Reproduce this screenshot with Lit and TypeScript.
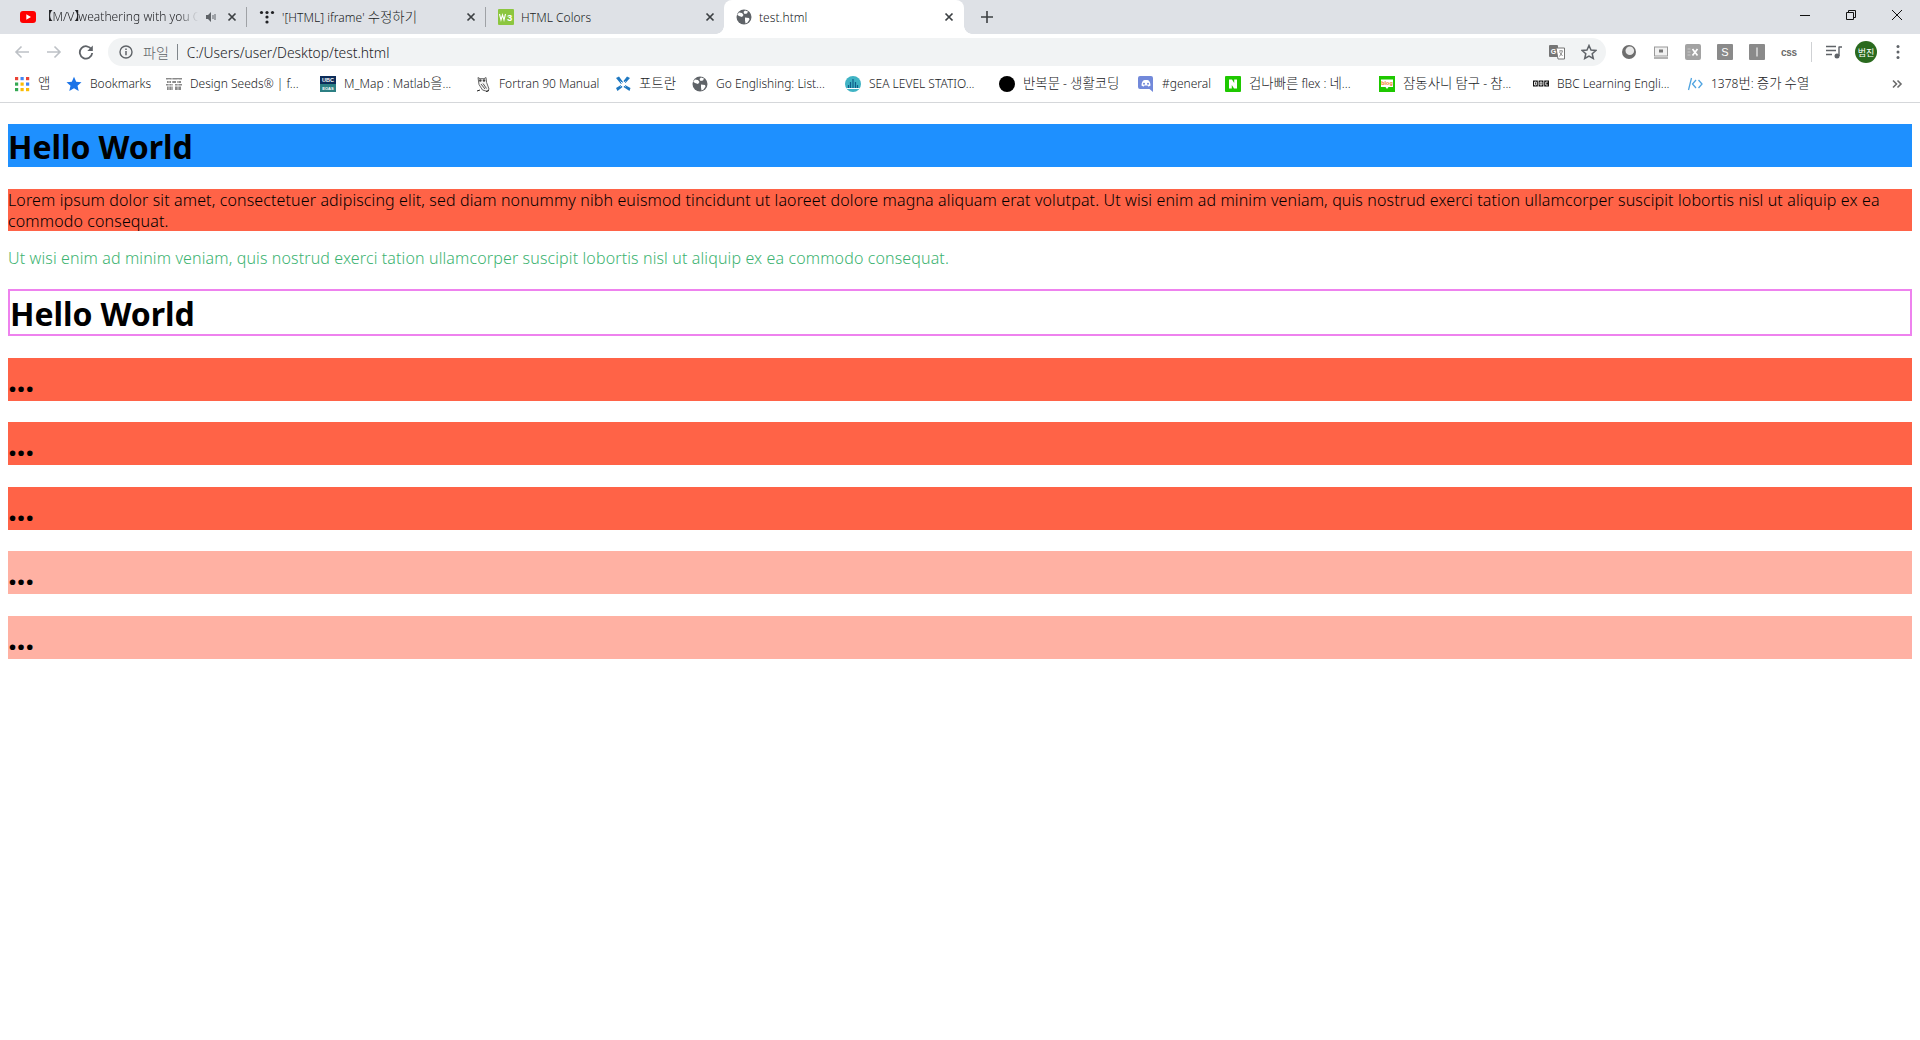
import { LitElement, html, css, svg } from "lit";
import { customElement } from "lit/decorators.js";

const globe = svg`<svg class="ico" viewBox="0 0 16 16"><circle cx="8" cy="8" r="7.5" fill="#5f6368"/><path d="M3 3.5l3 .5 1.5 2L6 8l-3-1-1.800-1.200zM9 1.500l3 1-1 2-2.500 .5-1-2zM9 8.500l4 .5 .5 1.500-2 3-2 1-.5-3z" fill="#fff"/></svg>`;

const ICONS: Record<string, unknown> = {
  apps: svg`<svg class="ico" viewBox="0 0 16 16">${[
    [1, 1, "#ea4335"], [6.500, 1, "#4285f4"], [12, 1, "#ea4335"],
    [1, 6.500, "#34a853"], [6.500, 6.500, "#fbbc05"], [12, 6.500, "#4285f4"],
    [1, 12, "#34a853"], [6.500, 12, "#fbbc05"], [12, 12, "#fbbc05"],
  ].map(([x, y, c]) => svg`<rect x=${x} y=${y} width="3.200" height="3.200" fill=${c as string}/>`)}</svg>`,
  star: svg`<svg class="ico" viewBox="0 0 16 16"><path d="M8 .8l2.200 4.900 5.300.6-4 3.500 1.200 5.300L8 12.300l-4.700 2.800 1.200-5.300-4-3.500 5.300-.6z" fill="#1a73e8"/></svg>`,
  seeds: svg`<svg class="ico" viewBox="0 0 16 16"><path d="M0 2h16v1.500H0zM1 5h4v2H1zM6 5h4v2H6zM11 5h4v2h-4zM0 8h7v1.500H0zM9 8h7v1.500H9zM1 10.500h6V14H1zM9 10.500h6V14H9z" fill="#8a8a8a"/><path d="M3 3v11M12 3v11M6 2v12" stroke="#fff" stroke-width=".6"/></svg>`,
  ubc: svg`<svg class="ico" viewBox="0 0 16 16"><rect width="16" height="8" fill="#0d2d5a"/><rect y="8" width="16" height="8" fill="#2c7f83"/><text x="8" y="6.300" text-anchor="middle" font-size="5.500" font-weight="700" font-family="Liberation Sans" fill="#fff">UBC</text><text x="8" y="14" text-anchor="middle" font-size="4" font-weight="700" font-family="Liberation Sans" fill="#fff">EOAS</text></svg>`,
  owl: svg`<svg class="ico" viewBox="0 0 16 16"><path d="M3 1.500l2 1.200h4l2-1.200.6 5L14 13l-1.500 2.500-5-1.500L4 8.500z" fill="#f4f4f4" stroke="#666" stroke-width="1"/><circle cx="5.300" cy="4.500" r="1.300" fill="#444"/><circle cx="9" cy="4.500" r="1.300" fill="#444"/><path d="M6 8l4 5M8 7.500l3.500 5" stroke="#555"/><path d="M2 15l3-1M11 15.500l3-1" stroke="#222"/></svg>`,
  fortran: svg`<svg class="ico" viewBox="0 0 16 16"><path d="M1 2l3-1.500L8 6 6 8zM15 2l-3-1.500L8.500 5l2 2zM2.500 15L1 12l5-3 1.500 2zM14.500 15l1-3-5.500-3-1.500 2z" fill="#1f78c1"/><path d="M5.500 5.500l5 5M10.500 5.500l-5 5" stroke="#fff" stroke-width="1"/></svg>`,
  sea: svg`<svg class="ico" viewBox="0 0 16 16"><circle cx="8" cy="8" r="8" fill="#3fb3c4"/><path d="M8 3v9M5.500 6v6M10.500 6v6M3.500 9v3M12.500 9v3" stroke="#0f5e8a" stroke-width="1.200"/><path d="M1.500 12.500h13" stroke="#fff"/></svg>`,
  dot: svg`<svg class="ico" viewBox="0 0 16 16"><circle cx="8" cy="8" r="8" fill="#000"/></svg>`,
  discord: svg`<svg class="ico" viewBox="0 0 16 16"><path d="M2 0h11a2 2 0 0 1 2 2v14l-3.500-3H2a2 2 0 0 1-2-2V2a2 2 0 0 1 2-2z" fill="#7289da"/><path d="M3.500 9.500c0-2.500 1-4.500 1.800-5 1-.4 1.700-.4 2.700-.4s1.700 0 2.700.4c.8.5 1.800 2.500 1.800 5-1 .9-1.800 1-2.300 1l-.6-.9H6.400l-.6.9c-.5 0-1.300-.1-2.300-1z" fill="#fff"/><circle cx="6" cy="7.800" r="1" fill="#7289da"/><circle cx="10" cy="7.800" r="1" fill="#7289da"/></svg>`,
  naver: svg`<svg class="ico" viewBox="0 0 16 16"><rect width="16" height="16" rx="1" fill="#1ec800"/><path d="M4 3.500h3l2.200 3.600V3.500H12v9H9L6.800 8.900v3.600H4z" fill="#fff"/></svg>`,
  blog: svg`<svg class="ico" viewBox="0 0 16 16"><rect width="16" height="16" fill="#1ec800"/><path d="M2 3.500h12v7.500H9.500L8 13l-1.500-2H2z" fill="#fff"/><text x="8" y="9.300" text-anchor="middle" font-size="5.500" font-weight="700" font-family="Liberation Sans" fill="#f0801a">blog</text></svg>`,
  bbc: svg`<svg class="ico" viewBox="0 0 16 16"><rect y="4.500" width="4.800" height="6" fill="#111"/><rect x="5.600" y="4.500" width="4.800" height="6" fill="#111"/><rect x="11.200" y="4.500" width="4.800" height="6" fill="#111"/><path d="M1.500 6v3h1.800V6zM7.100 6v3h1.800V6zM14.800 6h-2v3h2" fill="none" stroke="#fff" stroke-width=".9"/></svg>`,
  code: svg`<svg class="ico" viewBox="0 0 16 16"><path d="M4.500 2L1.500 14" stroke="#4fa3e0" stroke-width="1.300" fill="none"/><path d="M9 4L5.500 8 9 12M11.500 4L15 8l-3.500 4" stroke="#4fa3e0" stroke-width="1.300" fill="none"/></svg>`,
  globe,
};

const BOOKMARKS: [string, string, number][] = [
  ["apps", "앱", 52],
  ["star", "Bookmarks", 100],
  ["seeds", "Design Seeds® | f...", 154],
  ["ubc", "M_Map : Matlab을...", 155],
  ["owl", "Fortran 90 Manual", 140],
  ["fortran", "포트란", 77],
  ["globe", "Go Englishing: List...", 153],
  ["sea", "SEA LEVEL STATIO...", 154],
  ["dot", "반복문 - 생활코딩", 139],
  ["discord", "#general", 87],
  ["naver", "겁나빠른 flex : 네...", 154],
  ["blog", "잠동사니 탐구 - 참...", 154],
  ["bbc", "BBC Learning Engli...", 154],
  ["code", "1378번: 증가 수열", 140],
];

/** Hangul runs are set larger than the Latin around them, as in the reference. */
function mixed(text: string) {
  return text.split(/([\uac00-\ud7a3]+)/).map((part, i) => (i % 2 ? html`<span class="ko">${part}</span>` : part));
}

@customElement("app-root")
export class AppRoot extends LitElement {
  static styles = css`
    :host { display: block; background: #fff; min-height: 1040px; color: #000; font-family: "Noto Sans", "Noto Sans CJK KR", sans-serif; }
    .ico { width: 16px; height: 16px; flex: none; display: block; }
    .ko { font-size: 13.4px; letter-spacing: 0; font-family: "Noto Sans CJK KR", sans-serif; font-weight: 300; line-height: 1; }
    .strip { display: flex; height: 34px; background: #dee1e6; padding-left: 8px; align-items: stretch; }
    .tab { width: 238px; display: flex; align-items: center; padding: 0 7px 0 12px; box-sizing: border-box; font-size: 12px; font-weight: 300; letter-spacing: 0.04px; color: #202124; gap: 7px; }
    .tab.active { width: 240px; padding-right: 8px; background: #fff; border-radius: 8px 8px 0 0; position: relative; }
    .tab.active::before, .tab.active::after { content: ""; position: absolute; bottom: 0; width: 8px; height: 8px; }
    .tab.active::before { left: -8px; background: radial-gradient(circle at 0 0, #dee1e6 7.500px, #fff 8px); }
    .tab.active::after { right: -8px; background: radial-gradient(circle at 100% 0, #dee1e6 7.500px, #fff 8px); }
    .title { flex: 1; min-width: 0; white-space: nowrap; }
    .fade { overflow: hidden; line-height: 24px; -webkit-mask-image: linear-gradient(90deg, #000 88%, transparent 100%); mask-image: linear-gradient(90deg, #000 88%, transparent 100%); }
    .brk { letter-spacing: -0.5px; margin-left: -2px; }
    .brk2 { letter-spacing: -8px; }
    .close { width: 14px; height: 14px; flex: none; }
    .speaker { width: 12px; height: 12px; flex: none; margin-right: 1px; }
    .sep { width: 1px; height: 20px; background: #9fa2a6; align-self: center; }
    .plus { width: 16px; height: 16px; margin: 9px 0 0 15px; }
    .winctl { margin-left: auto; display: flex; }
    .winbtn { width: 46px; height: 29px; display: flex; align-items: center; justify-content: center; }
    .toolbar { height: 32px; background: #fff; display: flex; align-items: center; padding-left: 6px; box-sizing: border-box; padding-top: 4px; }
    .tb { width: 32px; height: 28px; display: flex; align-items: center; justify-content: center; flex: none; }
    .omni { margin: 0 7px 0 6px; width: 1498px; height: 28px; background: #f1f3f4; border-radius: 14px; display: flex; align-items: center; padding: 0 9px 0 11px; box-sizing: border-box; font-size: 13.85px; font-weight: 300; color: #202124; }
    .scheme { color: #5f6368; margin-left: 10px; font-size: 14px; font-family: "Noto Sans CJK KR", sans-serif; font-weight: 300; }
    .bar { width: 1px; height: 16px; background: #80868b; margin: 0 9px 0 8px; }
    .url { flex: 1; }
    .omni-end { display: flex; gap: 16px; align-items: center; }
    .tsep { width: 1px; height: 20px; background: #cfd1d4; margin: 0 6px; flex: none; }
    .avatar { width: 22px; height: 22px; border-radius: 50%; background: #2a6a1e; color: #fff; font-size: 9px; display: flex; align-items: center; justify-content: center; font-family: "Noto Sans CJK KR", sans-serif; }
    .marks { height: 37px; box-sizing: border-box; background: #fff; border-bottom: 1px solid #d5d7da; display: flex; align-items: center; padding-left: 14px; padding-bottom: 1px; font-size: 12px; font-weight: 300; color: #202124; }
    .mark { display: flex; align-items: center; gap: 8px; flex: none; white-space: nowrap; }
    .more { margin-left: auto; margin-right: 17px; width: 12px; height: 12px; }
    .page { padding: 0 8px; }
    h1 { font-size: 32px; line-height: 43px; font-weight: 700; margin: 21.44px 0; letter-spacing: -0.4px; }
    h1.hello { line-height: 41px; padding-top: 2px; letter-spacing: -0.07px; }
    p { font-size: 16px; line-height: 21px; margin: 16px 0; padding-top: 1px; box-sizing: border-box; letter-spacing: 0.125px; font-weight: 300; }
    .two { height: 42px; }
    .one { height: 21px; }
    .blue { background: #1e90ff; }
    .tomato { background: #ff6347; }
    .green { color: #3cb371; }
    .outlined { border: 2px solid #ee82ee; }
    .pale { background: rgba(255, 99, 71, 0.5); }
  `;

  private x() {
    return svg`<svg class="close" viewBox="0 0 14 14"><path d="M3.500 3.500l7 7M10.500 3.500l-7 7" stroke="#3c4043" stroke-width="1.700"/></svg>`;
  }

  render() {
    const lorem = "Lorem ipsum dolor sit amet, consectetuer adipiscing elit, sed diam nonummy nibh euismod tincidunt ut laoreet dolore magna aliquam erat volutpat. Ut wisi enim ad minim veniam, quis nostrud exerci tation ullamcorper suscipit lobortis nisl ut aliquip ex ea commodo consequat.";
    return html`
      <div class="strip">
        <div class="tab">
          <svg class="ico" viewBox="0 0 16 16"><rect y="2" width="16" height="12" rx="3" fill="#f00"/><path d="M6.300 5.300v5.400L11 8z" fill="#fff"/></svg>
          <span class="title fade"><span class="brk">【</span>M/V<span class="brk2">】</span>weathering with you OST</span>
          <svg class="speaker" viewBox="0 0 12 12"><path d="M1 4h2l3-3v10L3 8H1z" fill="#5f6368"/><path d="M8 4v4M10 3v6" stroke="#5f6368"/></svg>
          ${this.x()}
        </div>
        <div class="sep"></div>
        <div class="tab">
          <svg class="ico" viewBox="0 0 16 16" fill="#202124"><circle cx="2.500" cy="3.500" r="1.600"/><circle cx="8" cy="3.500" r="1.600"/><circle cx="13.500" cy="3.500" r="1.600"/><circle cx="8" cy="8" r="1.600"/><circle cx="8" cy="13" r="1.600"/></svg>
          <span class="title">${mixed("'[HTML] iframe' 수정하기")}</span>
          ${this.x()}
        </div>
        <div class="sep"></div>
        <div class="tab">
          <svg class="ico" viewBox="0 0 16 16"><rect width="16" height="16" rx="1" fill="#8cc63f"/><path d="M1.500 5l1.500 6 1.500-5 1.500 5 1.500-6" fill="none" stroke="#fff" stroke-width="1.100"/><text x="9" y="12" font-size="9.500" font-weight="700" font-family="Liberation Sans" fill="#fff">3</text></svg>
          <span class="title">HTML Colors</span>
          ${this.x()}
        </div>
        <div class="tab active">
          ${globe}
          <span class="title">test.html</span>
          ${this.x()}
        </div>
        <svg class="plus" viewBox="0 0 16 16"><path d="M8 2v12M2 8h12" stroke="#3c4043" stroke-width="1.600"/></svg>
        <div class="winctl">
          <div class="winbtn"><svg width="12" height="12" viewBox="0 0 12 12"><path d="M1 6.500h10" stroke="#111"/></svg></div>
          <div class="winbtn"><svg width="12" height="12" viewBox="0 0 12 12"><path d="M1.500 3.500h7v7h-7zM3.500 3.500v-2h7v7h-2" fill="none" stroke="#111"/></svg></div>
          <div class="winbtn"><svg width="12" height="12" viewBox="0 0 12 12"><path d="M1 1l10 10M11 1L1 11" stroke="#111"/></svg></div>
        </div>
      </div>

      <div class="toolbar">
        <div class="tb"><svg width="16" height="16" viewBox="0 0 16 16"><path d="M15 8H2M7.500 2.500L2 8l5.500 5.500" fill="none" stroke="#bdc1c6" stroke-width="1.600"/></svg></div>
        <div class="tb"><svg width="16" height="16" viewBox="0 0 16 16"><path d="M1 8h13M8.500 2.500L14 8l-5.500 5.500" fill="none" stroke="#bdc1c6" stroke-width="1.600"/></svg></div>
        <div class="tb"><svg width="16" height="16" viewBox="0 0 16 16"><path d="M13.500 5.500A6.200 6.200 0 1 0 14.200 9" fill="none" stroke="#5f6368" stroke-width="1.800"/><path d="M14.800 1.500v5.500H9.300z" fill="#5f6368"/></svg></div>
        <div class="omni">
          <svg class="ico" style="width:14px;height:14px" viewBox="0 0 14 14"><circle cx="7" cy="7" r="6" fill="none" stroke="#5f6368" stroke-width="1.400"/><path d="M7 6v4.200M7 3.500v1.400" stroke="#5f6368" stroke-width="1.500"/></svg>
          <span class="scheme">파일</span>
          <span class="bar"></span>
          <span class="url">C:/Users/user/Desktop/test.html</span>
          <div class="omni-end">
            <svg class="ico" viewBox="0 0 16 16"><rect x="0" y="1" width="9" height="12" rx="1" fill="#757575"/><path d="M7 4h8.500v11H9z" fill="#fff" stroke="#757575"/><text x="4.400" y="9.500" text-anchor="middle" font-size="7" font-weight="700" font-family="Liberation Sans" fill="#fff">G</text><path d="M10 7h4M12 6v1M10.500 12.500L13.500 7.500M10.500 8l3 4" stroke="#757575" stroke-width=".8"/></svg>
            <svg class="ico" viewBox="0 0 16 16"><path d="M8 1.500l2 4.500 4.900.5-3.700 3.200 1.100 4.800L8 12l-4.300 2.500 1.100-4.800L1.100 6.500 6 6z" fill="none" stroke="#5f6368" stroke-width="1.500"/></svg>
          </div>
        </div>
        <div class="tb"><svg class="ico" viewBox="0 0 16 16"><circle cx="8" cy="8" r="7" fill="#6d6d6d"/><circle cx="8.800" cy="6.800" r="4.300" fill="#e8e8e8"/></svg></div>
        <div class="tb"><svg class="ico" viewBox="0 0 16 16"><rect x="1.500" y="3" width="13" height="9" fill="#f1f1f1" stroke="#9a9a9a"/><path d="M1 14h14" stroke="#8a8a8a" stroke-width="1.300"/><rect x="6" y="5.500" width="4" height="3" fill="#777"/></svg></div>
        <div class="tb"><svg class="ico" viewBox="0 0 16 16"><rect width="16" height="16" rx="2" fill="#a3a3a3"/><path d="M2.500 5h3M2.500 8h3M2.500 11h3" stroke="#c9c9c9"/><path d="M7.500 5l5 6.500M12.500 5l-5 6.500" stroke="#fff" stroke-width="1.700"/></svg></div>
        <div class="tb"><svg class="ico" viewBox="0 0 16 16"><rect width="16" height="16" rx="1" fill="#8a8a8a"/><text x="8" y="12" text-anchor="middle" font-size="11" font-family="Liberation Sans" fill="#fff">S</text></svg></div>
        <div class="tb"><svg class="ico" viewBox="0 0 16 16"><rect width="16" height="16" rx="1" fill="#8a8a8a"/><path d="M8 3.500v9" stroke="#e8e8e8" stroke-width="1.300"/></svg></div>
        <div class="tb"><svg width="18" height="12" viewBox="0 0 18 12"><text x="9" y="9.500" text-anchor="middle" font-size="10" font-weight="700" font-family="Liberation Sans" fill="#6b6b6b" textLength="16">css</text></svg></div>
        <div class="tsep"></div>
        <div class="tb"><svg class="ico" viewBox="0 0 16 16"><path d="M0 2.500h10M0 6.500h10M0 10.500h6" stroke="#5f6368" stroke-width="1.400"/><path d="M13 3h3M13 2.500v9.500" stroke="#5f6368" stroke-width="1.400" fill="none"/><circle cx="11" cy="12" r="2.500" fill="#5f6368"/></svg></div>
        <div class="tb"><div class="avatar">범진</div></div>
        <div class="tb"><svg width="4" height="16" viewBox="0 0 4 16" fill="#5f6368"><circle cx="2" cy="2.500" r="1.500"/><circle cx="2" cy="8" r="1.500"/><circle cx="2" cy="13.500" r="1.500"/></svg></div>
      </div>

      <div class="marks">
        ${BOOKMARKS.map(([icon, text, w]) => html`<div class="mark" style="width:${w}px">${ICONS[icon]}<span>${mixed(text)}</span></div>`)}
        <svg class="more" viewBox="0 0 12 12"><path d="M2 2.500L5.500 6 2 9.500M6.500 2.500L10 6l-3.500 3.500" fill="none" stroke="#6b6b6b" stroke-width="1.600"/></svg>
      </div>

      <div class="page">
        <h1 class="blue hello">Hello World</h1>
        <p class="tomato two">${lorem}</p>
        <p class="green one">Ut wisi enim ad minim veniam, quis nostrud exerci tation ullamcorper suscipit lobortis nisl ut aliquip ex ea commodo consequat.</p>
        <h1 class="outlined hello">Hello World</h1>
        <h1 class="tomato">...</h1>
        <h1 class="tomato">...</h1>
        <h1 class="tomato">...</h1>
        <h1 class="pale">...</h1>
        <h1 class="pale">...</h1>
      </div>
    `;
  }
}
